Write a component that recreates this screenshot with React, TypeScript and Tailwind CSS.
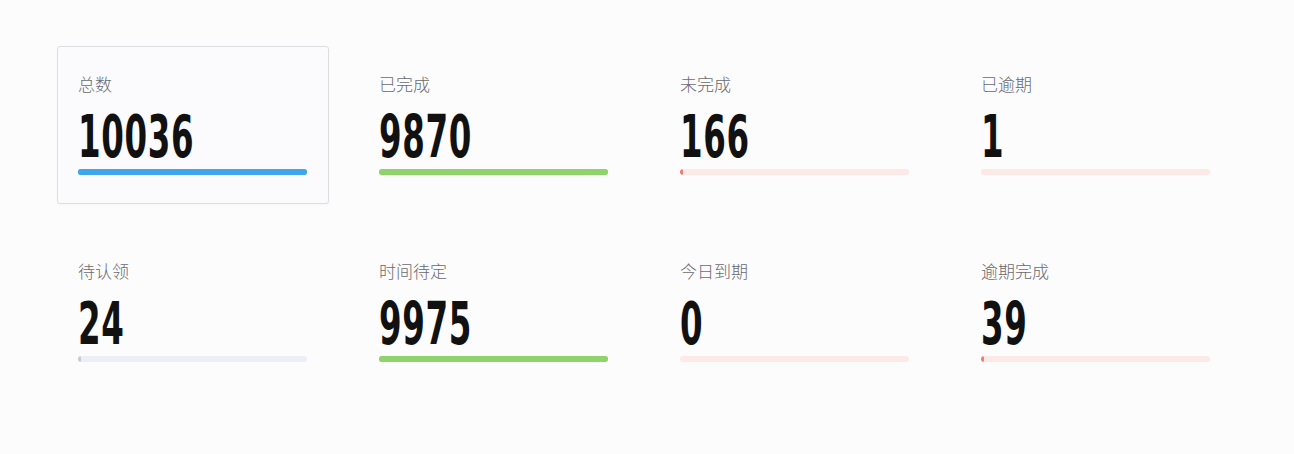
import React from "react";

type Stat = {
  label: string;
  value: string;
  track: string;
  fill: string;
  pct: number;
  boxed?: boolean;
};

const stats: Stat[] = [
  { label: "总数", value: "10036", track: "#3fa6ee", fill: "#3fa6ee", pct: 100, boxed: true },
  { label: "已完成", value: "9870", track: "#8ed46b", fill: "#8ed46b", pct: 100 },
  { label: "未完成", value: "166", track: "#fde9e6", fill: "#f07b73", pct: 1.2 },
  { label: "已逾期", value: "1", track: "#fde9e6", fill: "#fde9e6", pct: 0 },
  { label: "待认领", value: "24", track: "#eeeef8", fill: "#c9c9d6", pct: 0.8 },
  { label: "时间待定", value: "9975", track: "#8ed46b", fill: "#8ed46b", pct: 100 },
  { label: "今日到期", value: "0", track: "#fde9e6", fill: "#fde9e6", pct: 0 },
  { label: "逾期完成", value: "39", track: "#fde9e6", fill: "#f07b73", pct: 0.6 },
];

function Card({ s }: { s: Stat }) {
  return (
    <div
      className={
        "w-[272px] h-[158px] pl-[20px] pr-[20px] pt-[26px] flex flex-col rounded-[3px] border " +
        (s.boxed ? "border-[#dedee2] bg-[#fbfbfd] shadow-[0_1px_2px_rgba(0,0,0,0.03)]" : "border-transparent")
      }
    >
      <div
        className="text-[17px] leading-[22px] text-[#6a6a70] h-[22px]"
        style={{ fontFamily: '"Noto Sans CJK SC", "Noto Sans", sans-serif', fontWeight: 300 }}
      >
        {s.label}
      </div>
      <div className="h-[62px] mt-[12px] flex items-start">
        <span
          className="inline-block text-[44px] leading-[44px] font-bold text-[#111] origin-top-left scale-x-[0.82] scale-y-[1.34] tracking-[0.8px]"
          style={{ fontFamily: '"DejaVu Sans Condensed", "Liberation Sans", sans-serif' }}
        >
          {s.value}
        </span>
      </div>
      <div
        className="h-[6px] w-[229px] rounded-full overflow-hidden"
        style={{ backgroundColor: s.track }}
      >
        <div
          className="h-full rounded-full"
          style={{ width: s.pct > 0 ? `max(${s.pct}%, 3px)` : 0, backgroundColor: s.fill }}
        />
      </div>
    </div>
  );
}

export default function App() {
  return (
    <div className="w-[1294px] h-[454px] bg-[#fcfcfd] pl-[57px] pt-[46px]">
      <div className="grid grid-cols-[repeat(4,272px)] gap-x-[29px] gap-y-[29px]">
        {stats.map((s) => (
          <Card key={s.label} s={s} />
        ))}
      </div>
    </div>
  );
}
